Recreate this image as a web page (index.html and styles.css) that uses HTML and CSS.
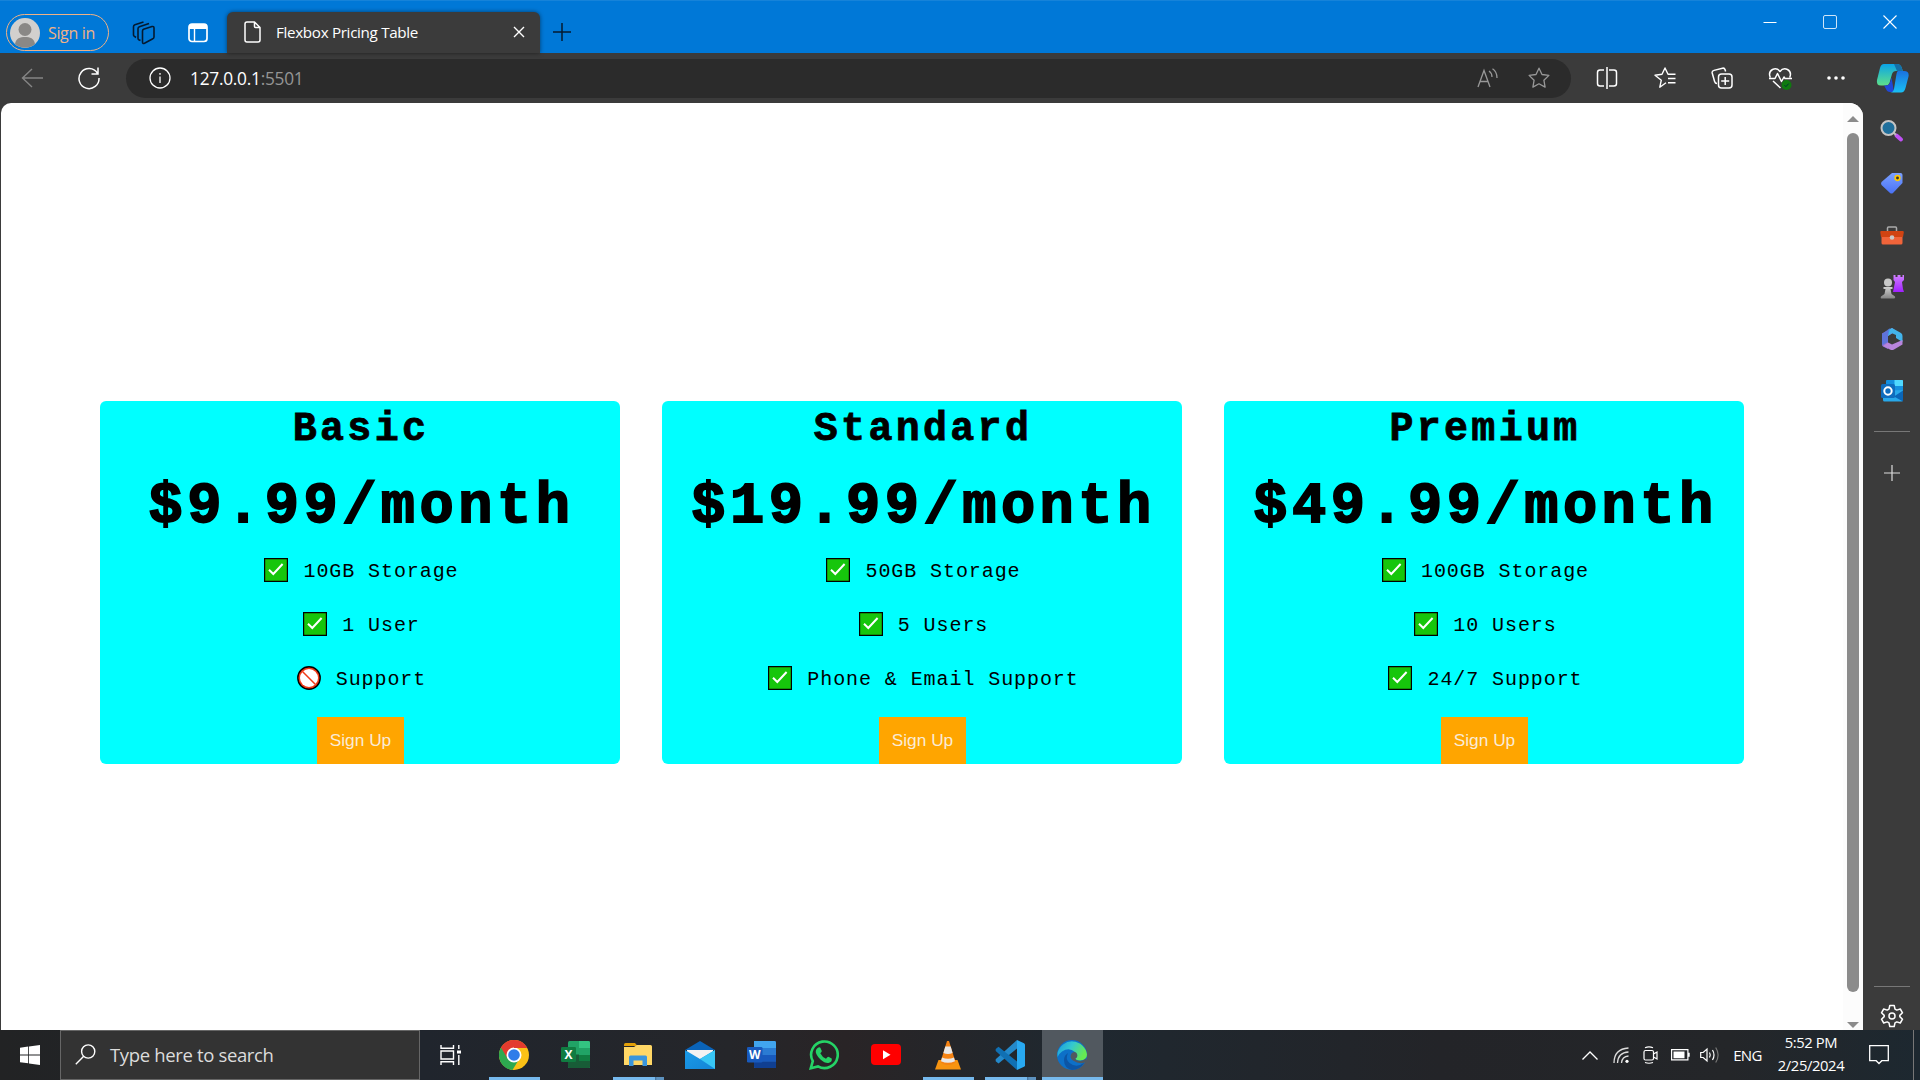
FILE: index.html
```html
<!DOCTYPE html>
<html lang="en">
<head>
<meta charset="utf-8">
<title>Flexbox Pricing Table</title>
<link rel="stylesheet" href="styles.css">
</head>
<body>
<svg class="defs" aria-hidden="true">
  <defs>
    <linearGradient id="gTeal" x1="0" y1="0" x2="0" y2="1"><stop offset="0" stop-color="#0aa4e8"/><stop offset="1" stop-color="#5ee08a"/></linearGradient>
    <linearGradient id="gBlue" x1="0" y1="0" x2="0" y2="1"><stop offset="0" stop-color="#1a72e0"/><stop offset="1" stop-color="#19c0f5"/></linearGradient>
    <linearGradient id="gTag" x1="0" y1="0" x2="0" y2="1"><stop offset="0" stop-color="#7aa0ff"/><stop offset="1" stop-color="#4a72f5"/></linearGradient>
    <linearGradient id="gGrey" x1="0" y1="0" x2="0" y2="1"><stop offset="0" stop-color="#d0d0d0"/><stop offset="1" stop-color="#858585"/></linearGradient>
    <linearGradient id="gPurple" x1="0" y1="0" x2="0" y2="1"><stop offset="0" stop-color="#d080ff"/><stop offset="1" stop-color="#a020ff"/></linearGradient>
    <linearGradient id="gEdge" x1="0" y1="0" x2="1" y2=".4"><stop offset="0" stop-color="#1a98e0"/><stop offset=".5" stop-color="#34c8cf"/><stop offset="1" stop-color="#66ea52"/></linearGradient>
    <linearGradient id="gMail" x1="0" y1="0" x2="1" y2="1"><stop offset="0" stop-color="#1a9be8"/><stop offset="1" stop-color="#1484d6"/></linearGradient>
    <symbol id="check" viewBox="0 0 24 24"><path d="M.6.6h22.8v22.8H.6z" fill="#16c60c" stroke="#000" stroke-width="1.2"/><path d="M5 11.700l4.300 4.300 9.300-10" fill="none" stroke="#fff" stroke-width="2"/></symbol>
    <symbol id="ban" viewBox="0 0 24 24"><circle cx="12" cy="12" r="11.2" fill="#f03a17" stroke="#000" stroke-width="1.4"/><circle cx="12" cy="12" r="9" fill="#fff"/><path d="M5.500 5.500l13 13" stroke="#f03a17" stroke-width="1.500"/></symbol>
  </defs>
</svg>

<header class="titlebar">
  <div class="signin">
    <svg width="30" height="30" viewBox="0 0 30 30"><circle cx="15" cy="15" r="15" fill="#d2d0ce"/><circle cx="15" cy="11.500" r="6.500" fill="#8a8886"/><path d="M5 26c1-6 5-7 10-7s9 1 10 7a15 15 0 0 1-20 0z" fill="#8a8886"/></svg>
    <span>Sign in</span>
  </div>
  <div class="tabtools">
    <svg width="23" height="24" viewBox="0 0 23 24" fill="none" stroke="#041a30" stroke-width="1.600" stroke-linejoin="round"><path d="M11.500 8.200l8.500-2.700q2-.4 2 1.500V16q0 1.300-1.200 1.800l-8.300 4.500q-2 .7-2-1.300V10q0-1.300 1-1.800zM8.500 19.500l-1.700-.8q-.8-.5-.8-1.500V7.700q0-1.500 1.400-2L17 2.500M4 16.500l-1.800-1.300q-.7-.6-.7-1.500V5.800q0-1.500 1.400-2L11.500 1"/></svg>
    <svg width="20" height="20" viewBox="0 0 20 20"><rect x="1" y="1" width="18" height="17.500" rx="3" fill="none" stroke="#fff" stroke-width="1.700"/><path d="M1 6V4q0-3 3-3h12q3 0 3 3v2z" fill="#fff"/><path d="M6.500 6v12" stroke="#fff" stroke-width="1.400"/></svg>
  </div>
  <div class="tab">
    <svg width="17" height="22" viewBox="0 0 17 22" fill="none" stroke="#fff" stroke-width="1.500" stroke-linejoin="round"><path d="M3 1h7.500L16 6.500V19q0 2-2 2H3q-2 0-2-2V3q0-2 2-2zM10.500 1v4.500q0 1 1 1H16"/></svg>
    <span class="tabtitle">Flexbox Pricing Table</span>
    <svg width="12" height="12" viewBox="0 0 12 12" stroke="#fff" stroke-width="1.400"><path d="M1 1l10 10M11 1L1 11"/></svg>
  </div>
  <svg class="newtab" width="18" height="18" viewBox="0 0 18 18" stroke="#041a30" stroke-width="1.500"><path d="M9 0v18M0 9h18"/></svg>
  <div class="winctl">
    <svg width="14" height="14" viewBox="0 0 14 14" stroke="#fff"><path d="M.5 7.500h13"/></svg>
    <svg width="14" height="14" viewBox="0 0 14 14" fill="none" stroke="#cfe5f8"><rect x=".5" y=".5" width="13" height="13" rx="1.500"/></svg>
    <svg width="14" height="14" viewBox="0 0 14 14" stroke="#fff" stroke-width="1.100"><path d="M.5.5l13 13M13.500.5l-13 13"/></svg>
  </div>
</header>

<nav class="toolbar">
  <svg class="back" width="22" height="20" viewBox="0 0 22 20" fill="none" stroke="#858585" stroke-width="1.400"><path d="M22 10H1.500M11 1L1.500 10l9.500 9"/></svg>
  <svg class="reload" width="24" height="24" viewBox="0 0 24 24" fill="none" stroke="#fff" stroke-width="1.500"><path d="M20.500 7.300A10 10 0 1 0 22 12M21 1.500v6.500h-6.500"/></svg>
  <div class="address">
    <svg width="22" height="22" viewBox="0 0 22 22" fill="none" stroke="#fff" stroke-width="1.300"><circle cx="11" cy="11" r="10"/><path d="M11 9.500v6.500M11 6v1.700"/></svg>
    <span class="url">127.0.0.1<span class="port">:5501</span></span>
    <svg width="22" height="20" viewBox="0 0 22 20" fill="none" stroke="#989898" stroke-width="1.300"><path d="M1 19L7 2.500 13 19M3 13.500h8M12 3q3 2 3 6M15.500.8q4.500 3 4.500 9.200"/></svg>
    <svg width="22" height="22" viewBox="0 0 22 22" fill="none" stroke="#989898" stroke-width="1.300" stroke-linejoin="round"><path d="M11 1.200l3 6.300 6.900.9-5 4.800 1.200 6.900-6.100-3.300-6.100 3.300 1.200-6.900-5-4.800 6.900-.9z"/></svg>
  </div>
  <div class="actions">
    <svg width="22" height="22" viewBox="0 0 22 22" fill="none" stroke="#fff" stroke-width="1.500"><path d="M8 3H4Q1.500 3 1.500 5.500v11Q1.500 19 4 19h4M13 3h5q2.500 0 2.500 2.500v11Q20.500 19 18 19h-5M11 0v22"/></svg>
    <svg width="22" height="22" viewBox="0 0 22 22" fill="none" stroke="#fff" stroke-width="1.400" stroke-linejoin="round"><path d="M12 15.800l-6.200 4.400 1.500-7L1 8.300l7-1L11 1l3 6.300h7.500M14 11.500h7.500M14 15.700h7.500"/></svg>
    <svg width="22" height="22" viewBox="0 0 22 22" fill="none" stroke="#fff" stroke-width="1.500"><rect x="7.500" y="7" width="13.500" height="14" rx="3"/><path d="M14.200 10v8M10.200 14h8M6 16.500q-1.800 0-2.400-2L1.200 6Q.8 4 3 3.400l8.500-2.200q2-.4 2.600 1.500l.5 1.800"/></svg>
    <svg width="24" height="24" viewBox="0 0 24 24" fill="none" stroke="#fff" stroke-width="1.500" stroke-linejoin="round"><path d="M2.300 11.500Q0 6 4.500 3.500 9 1.500 12 5.500q3-4 7.500-2 4.500 2.500 2.200 8M1 12.500h6l2.500-5 4 8 2.500-4.500 1 1.500h7M5 15l7.500 7"/><circle cx="18.500" cy="19" r="5" fill="#0f7a0f" stroke="none"/><path d="M16.500 19.200l1.400 1.400 2.800-3" stroke="#033" stroke-width="1"/></svg>
    <svg width="20" height="6" viewBox="0 0 20 6" fill="#fff"><circle cx="3" cy="3" r="1.800"/><circle cx="10" cy="3" r="1.800"/><circle cx="17" cy="3" r="1.800"/></svg>
    <svg width="33" height="29" viewBox="0 0 33 29"><path d="M8 0h13q3 0 4.500 3l1.300 4H20q-3 0-4 3l-2.500 9q-1 2.500-4 2.500H5Q0 21.500 1 16L4 4q1-4 4-4z" fill="url(#gTeal)"/><path d="M18 0h3q3 0 4.500 3l1.300 4H21z" fill="#1470a8"/><path d="M8 21.500h2q3 0 4-3l1.500-5L18 28h-4q-3 0-4-3z" fill="#2048d8"/><path d="M22 7h6q5.500 0 4.500 5.500L29.500 24q-1.200 4.500-4.500 4.500H14q3 0 4-3.500l2.500-15Q21 7 22 7z" fill="url(#gBlue)"/></svg>
  </div>
</nav>

<div class="middle">
  <main class="page">
    <section class="plans">
      <article class="plan">
        <h2>Basic</h2>
        <p class="price">$9.99/month</p>
        <ul>
          <li><svg class="mark"><use href="#check"/></svg>10GB Storage</li>
          <li><svg class="mark"><use href="#check"/></svg>1 User</li>
          <li><svg class="mark"><use href="#ban"/></svg>Support</li>
        </ul>
        <button>Sign Up</button>
      </article>
      <article class="plan">
        <h2>Standard</h2>
        <p class="price">$19.99/month</p>
        <ul>
          <li><svg class="mark"><use href="#check"/></svg>50GB Storage</li>
          <li><svg class="mark"><use href="#check"/></svg>5 Users</li>
          <li><svg class="mark"><use href="#check"/></svg>Phone &amp; Email Support</li>
        </ul>
        <button>Sign Up</button>
      </article>
      <article class="plan">
        <h2>Premium</h2>
        <p class="price">$49.99/month</p>
        <ul>
          <li><svg class="mark"><use href="#check"/></svg>100GB Storage</li>
          <li><svg class="mark"><use href="#check"/></svg>10 Users</li>
          <li><svg class="mark"><use href="#check"/></svg>24/7 Support</li>
        </ul>
        <button>Sign Up</button>
      </article>
    </section>
    <div class="scrollbar"><i class="up"></i><i class="thumb"></i><i class="down"></i></div>
  </main>
  <aside class="sidebar">
    <svg width="24" height="24" viewBox="0 0 24 24"><path d="M16.500 16.500l4.500 4" stroke="#c050f5" stroke-width="4" stroke-linecap="round"/><path d="M13 13l3 3" stroke="#bbb" stroke-width="2"/><circle cx="8.500" cy="9" r="7" fill="#1f6f9c" stroke="#c4c4c4" stroke-width="2"/></svg>
    <svg width="24" height="24" viewBox="0 0 24 24"><path d="M12 2h8.500Q22.500 2 22.500 4v8l-9.500 10q-1.500 1-3 0L1.500 14q-1-1.500 0-3z" fill="url(#gTag)"/><circle cx="17.500" cy="7" r="2.300" fill="#333" stroke="#ffc800" stroke-width="1.700"/></svg>
    <svg width="24" height="24" viewBox="0 0 24 24"><path d="M7.500 8V5q0-1 1-1h7q1 0 1 1v3" fill="none" stroke="#aaa" stroke-width="1.500"/><path d="M1.500 12h21v8q0 1.500-1.500 1.500H3q-1.500 0-1.500-1.500z" fill="#f0643a"/><path d="M1 8h22q1 0 .8 1.500L23 14H1L.3 9.500Q0 8 1 8z" fill="#d04312"/><circle cx="12" cy="14.500" r="2.300" fill="#c8c8c8"/></svg>
    <svg width="24" height="24" viewBox="0 0 24 24"><path d="M13.500 0h2v2h2V0h3v2h2V0H24v5l-2 2 1 7 1 3H13l2-10-1.500-2z" fill="url(#gPurple)"/><circle cx="8" cy="7.500" r="4" fill="#c8c8c8"/><path d="M3.500 12h9v2h-2l1 5 3.500 2.500q.8 2-1 2H2q-2 0-1-2L4.500 19l1-5h-2z" fill="url(#gGrey)"/></svg>
    <svg width="24" height="24" viewBox="0 0 24 24"><path d="M12 1L2 6.500v11q0 1.500 1 2L8 22V9l8-5z" fill="#8e70d8"/><path d="M12 1l9 5q1.500 1 1.500 3v6L16 11V8l-4-1.800L8 9V3z" fill="#42b4ec"/><path d="M22.500 13v4.500L14 22.500q-2 1-4 0L3 19l5-3.500 4 2z" fill="#b884dc"/><path d="M2 7v11l6-3V9l2-8z" fill="#5374dc" opacity=".8"/></svg>
    <svg width="24" height="24" viewBox="0 0 24 24"><path d="M6 2q0-1 1-1h15q1 0 1 1v10H6z" fill="#1490df"/><path d="M14.500 1H22q1 0 1 1v5h-8.500z" fill="#50d9ff"/><path d="M3 12l20-1v10q0 1.500-1.500 1.500h-17Q3 22.500 3 21z" fill="#28a8ea"/><path d="M23 11.500v11l-9-5z" fill="#0a66b8"/><rect x="1" y="5" width="14" height="14" rx="1.500" fill="#0f6cbd"/><circle cx="8" cy="12" r="3.700" fill="none" stroke="#fff" stroke-width="2"/></svg>
    <i class="rule"></i>
    <svg class="plus" width="16" height="16" viewBox="0 0 16 16" stroke="#ddd" stroke-width="1.200"><path d="M8 0v16M0 8h16"/></svg>
    <i class="rule low"></i>
    <svg class="gear" width="24" height="24" viewBox="0 0 24 24" fill="none" stroke="#fff" stroke-width="1.500" stroke-linejoin="round"><path d="M9.800 1.500h4.400l.8 3.600 1.800 1 3.500-1.100 2.200 3.800-2.700 2.600v1.200l2.700 2.600-2.200 3.800-3.500-1.100-1.800 1-.8 3.600H9.800L9 18.900l-1.800-1-3.500 1.100-2.200-3.800 2.700-2.600v-1.200L1.500 8.800 3.700 5l3.500 1.100 1.800-1z"/><circle cx="12" cy="12" r="3"/></svg>
  </aside>
</div>

<footer class="taskbar">
  <div class="start"><svg width="20" height="20" viewBox="0 0 20 20" fill="#fff"><path d="M0 2.800l8.200-1.200v7.900H0zM9 1.500L20 0v9.500H9zM0 10.400h8.200v7.900L0 17.200zM9 10.400h11V20L9 18.500z"/></svg></div>
  <div class="search"><svg width="21" height="21" viewBox="0 0 21 21" fill="none" stroke="#fff" stroke-width="1.400"><circle cx="13.200" cy="7.500" r="6.600"/><path d="M8.700 12.300L.8 20.300"/></svg><span>Type here to search</span></div>
  <div class="apps">
    <div class="app"><svg width="21" height="20" viewBox="0 0 21 20" fill="none" stroke="#fff" stroke-width="1.400"><path d="M1 0v3.300h12.500V0M1 20v-3.300h12.500V20M1 6h12.500v8H1zM18.800 0v4M18.800 10v10"/><path d="M17 5.500h4v3h-4z" fill="#fff" stroke="none"/></svg></div>
    <div class="app run"><svg width="30" height="30" viewBox="0 0 30 30"><circle cx="15" cy="15" r="15" fill="#fbc116"/><path d="M15 15L2 7.500A15 15 0 0 0 13.500 30l7-11.500z" fill="#2da94f"/><path d="M2 7.500A15 15 0 0 1 28 7.500H15l-6.500 11z" fill="#e33b2e"/><circle cx="15" cy="15" r="7.500" fill="#fff"/><circle cx="15" cy="15" r="5.800" fill="#2f7de9"/><path d="M15 7.500h13" stroke="#e33b2e"/></svg></div>
    <div class="app"><svg width="30" height="28" viewBox="0 0 30 28"><rect x="7" width="22" height="27" rx="1.500" fill="#21a366"/><path d="M18 0h9.500Q29 0 29 1.500V7H18z" fill="#33c481"/><path d="M7 13.500h11V27H8.500Q7 27 7 25.500z" fill="#185c37"/><path d="M18 14h11v6H18z" fill="#107c41"/><path d="M18 20h11v5.500q0 1.500-1.500 1.500H18z" fill="#185c37"/><rect y="6" width="15" height="15" rx="1.300" fill="#107c41"/><text x="7.500" y="18" class="badge">X</text></svg></div>
    <div class="app run multi"><svg width="28" height="24" viewBox="0 0 28 24"><path d="M0 1.500Q0 0 1.500 0H11l2.500 3H0z" fill="#e3a008"/><path d="M0 4h10l3-2h13.500Q28 2 28 3.500V22H0z" fill="#ffd766"/><path d="M5 23v-9q0-1.500 1.500-1.500h15Q23 12.500 23 14v9h-4.500v-5.500h-9V23z" fill="#3a96dd"/></svg></div>
    <div class="app"><svg width="30" height="28" viewBox="0 0 30 28"><path d="M0 9L15 0l15 9z" fill="#0a63b8"/><path d="M2 9h26v10H2z" fill="#f2f2f2"/><path d="M0 9l15 9 15-9v19H0z" fill="url(#gMail)"/><path d="M30 9v19L15 18z" fill="#38c6f4"/></svg></div>
    <div class="app"><svg width="30" height="28" viewBox="0 0 30 28"><rect x="7" width="22" height="27" rx="1.500" fill="#2b7cd3"/><path d="M7 0h20.500Q29 0 29 1.500V7H7z" fill="#41a5ee"/><path d="M7 14h22v6.500H7z" fill="#185abd"/><path d="M7 20.500h22V27H8.500Q7 27 7 25.500z" fill="#103f91"/><rect y="6" width="15.500" height="15.500" rx="1.300" fill="#185abd"/><text x="7.700" y="18" class="badge">W</text></svg></div>
    <div class="app"><svg width="30" height="30" viewBox="0 0 30 30"><path d="M1.800 28.200l2-7A13.300 13.300 0 1 1 9 26.400z" fill="none" stroke="#25d366" stroke-width="2.600"/><path d="M9.500 7.500q1.500-.7 2 .5l1.300 3q0 1-1.500 2.300 2 4 5.700 5.500 1.400-2 2.500-2l3.200 1.700q.8 3.500-3.200 4.500-3.500.5-8-3.500-6-6-4.500-9.500.8-2 2.500-2.500z" fill="#25d366"/></svg></div>
    <div class="app"><svg width="30" height="22" viewBox="0 0 30 22"><rect width="30" height="21" rx="4" fill="red"/><path d="M12 6.300v9l7.500-4.500z" fill="#fff"/></svg></div>
    <div class="app run"><svg width="26" height="29" viewBox="0 0 26 29"><path d="M3.500 19h19L26 28.500H0z" fill="#f79410"/><path d="M12 0h2l6.500 21q-3 3-7.500 3t-7.500-3z" fill="#f58313"/><path d="M10.300 5.500h5.400L17.600 12q-4.600 2-9.200 0zM7 16.500q6 2.500 12 0l1 3.700q-7 3.300-14 0z" fill="#e8e8e8"/></svg></div>
    <div class="app run multi"><svg width="30" height="30" viewBox="0 0 30 30"><path d="M22 0v8.500L3.500 23.500.7 21.300v-2L22 0z" fill="#2489ca"/><path d="M22 30v-8.500L3.500 6.700.7 8.900v2L22 30z" fill="#1070b3"/><path d="M22 0l7 3.200q1 .5 1 1.600v20.400q0 1.100-1 1.600L22 30z" fill="#28a9f1"/></svg></div>
    <div class="app run active"><svg width="30" height="30" viewBox="0 0 30 30"><circle cx="15" cy="15" r="15" fill="#0d70c8"/><path d="M.5 13A15 15 0 0 1 30 14.500Q30 20 23 20.500q-5-.3-4.500-2.500 2.500-3-.5-6-6-5-13-.5Q1.500 14 .5 17z" fill="url(#gEdge)"/><path d="M11 13q-3 6 1.500 10 7 5.500 15-.5Q23 30 15 30 7 28 7 20q0-4.500 4-7z" fill="#0c55a5"/><path d="M18.500 18q-.6 3 5 3 3-.3 5.500-2.500v4l-1 0q-6 2-12-2-4-3-1.500-7 2-2.500 4.500-1 2.500 2.500.5 5.500z" fill="#51585f"/></svg></div>
  </div>
  <div class="tray">
    <svg width="16" height="9" viewBox="0 0 16 9" fill="none" stroke="#fff" stroke-width="1.300"><path d="M.5 8.500L8 1l7.500 7.500"/></svg>
    <svg width="16" height="16" viewBox="0 0 16 16" fill="none" stroke="#ddd" stroke-width="1.300"><path d="M1 16Q1 2 15.500 1M4.500 16Q5 5.500 15.500 5M8.500 16q.5-6.500 7-7" /><circle cx="14" cy="14.300" r="1.600" fill="#fff" stroke="none"/></svg>
    <svg width="16" height="18" viewBox="0 0 16 18" fill="none" stroke="#fff" stroke-width="1.200"><rect x="1" y="4.500" width="9.500" height="9.500" rx="1.500"/><path d="M10.500 8l3.500-2v7l-3.500-2M2 1.800Q6 0 10 1.800M2 16.500q4 1.500 8 0"/></svg>
    <svg width="19" height="12" viewBox="0 0 19 12"><path d="M.6.600h16.300v10.300H.6z" fill="none" stroke="#fff" stroke-width="1.200"/><path d="M2.500 2.500h11v6.700h-11zM17 3.700h1.700v4H17z" fill="#fff"/></svg>
    <svg width="20" height="18" viewBox="0 0 20 18" fill="none" stroke="#fff" stroke-width="1.200"><path d="M.7 6.500h2.500L7 3v12l-3.800-3.500H.7zM9.500 6.500q1.500 2.500 0 5M12.500 4q3 5 0 10"/><path d="M15.700 1.500q4.800 7.500 0 15" stroke="#777"/></svg>
    <span class="lang">ENG</span>
    <div class="clock"><span>5:52 PM</span><span>2/25/2024</span></div>
    <svg width="20" height="20" viewBox="0 0 20 20" fill="none" stroke="#fff" stroke-width="1.300"><path d="M.7.700h18.600v15h-6.500L10 18.500l-2.800-2.800H.7z"/></svg>
    <i class="peek"></i>
  </div>
</footer>
</body>
</html>
```
FILE: styles.css
```css
* { box-sizing: border-box; }
body {
  margin: 0;
  width: 1920px;
  height: 1080px;
  overflow: hidden;
  display: flex;
  flex-direction: column;
  background: #3b3b3b;
  color: #fff;
  font-family: "Open Sans", "Noto Sans", sans-serif;
}
svg { display: block; flex: none; }
.defs { position: absolute; width: 0; height: 0; }

/* window title bar */
.titlebar {
  flex: none;
  height: 53px;
  display: flex;
  background: #0078d7;
  border-top: 1px solid #1683d9;
  padding-left: 6px;
}
.signin {
  width: 103px;
  height: 37px;
  margin-top: 13px;
  padding-left: 3px;
  display: flex;
  align-items: center;
  gap: 8px;
  border: 1.5px solid #f0b285;
  border-radius: 19px;
  color: #f0b285;
  font-size: 16px;
  letter-spacing: -.35px;
  white-space: nowrap;
}
.tabtools {
  width: 118px;
  padding: 13px 19px 0 23px;
  display: flex;
  justify-content: space-between;
  align-items: center;
  height: 50px;
}
.tab {
  width: 313px;
  margin-top: 11px;
  padding: 0 15px 2px 17px;
  display: flex;
  align-items: center;
  background: #3b3b3b;
  border-radius: 6px 6px 0 0;
  box-shadow: 0 0 4px rgba(0, 0, 0, .5);
}
.tabtitle { margin-left: 15px; flex: 1; font-size: 15.2px; letter-spacing: -.32px; white-space: nowrap; }
.newtab { margin: 22px 0 0 13px; }
.winctl { margin: 14px 23px 0 auto; display: flex; gap: 46px; }

/* navigation toolbar */
.toolbar { flex: none; height: 50px; display: flex; align-items: center; padding-left: 21px; }
.reload { margin-left: 34px; }
.address {
  width: 1445px;
  height: 39px;
  margin-left: 25px;
  padding: 0 21px 0 23px;
  display: flex;
  align-items: center;
  gap: 19px;
  background: #2b2b2b;
  border-radius: 20px;
}
.address svg:last-child { margin-left: 10px; }
.url { flex: 1; font-size: 17.3px; letter-spacing: -.25px; }
.port { color: #959595; }
.actions { flex: 1; display: grid; grid-template-columns: 72px 44px 70px 45px 68px 44px; justify-items: center; align-items: center; }

/* viewport */
.middle { flex: none; height: 927px; display: flex; padding-left: 1px; }
.page {
  width: 1862px;
  display: flex;
  align-items: flex-start;
  background: #fff;
  border-radius: 10px 14px 0 0;
  overflow: hidden;
  color: #000;
}
.plans { width: 1842px; padding: 298px 99px 0; display: flex; gap: 42px; }
.plan {
  flex: 1;
  height: 363px;
  display: flex;
  flex-direction: column;
  align-items: center;
  background: aqua;
  border-radius: 6px;
  font-family: "Liberation Mono", monospace;
}
.plan h2 {
  margin: 2px 0 -2px 2px;
  font-size: 40px;
  line-height: 54px;
  letter-spacing: 3.3px;
  -webkit-text-stroke: .8px #000;
}
.price {
  margin: 3px 0 -3px 3px;
  font-size: 57px;
  font-weight: bold;
  line-height: 98px;
  letter-spacing: 4.500px;
  -webkit-text-stroke: 1.8px #000;
  white-space: nowrap;
}
.plan ul { margin: 0; padding: 0; list-style: none; font-size: 20px; letter-spacing: .92px; }
.plan li { height: 54px; display: flex; align-items: flex-start; justify-content: center; line-height: 37px; }
.mark { width: 24px; height: 24px; margin: 5px 15px 0 3px; }
.plan button {
  width: 87px;
  height: 47px;
  margin-top: auto;
  padding: 0 0 0 1px;
  border: 0;
  background: orange;
  color: antiquewhite;
  font: 17.3px "Liberation Sans", Arial, sans-serif;
}
.scrollbar {
  width: 20px;
  height: 100%;
  padding-top: 13px;
  display: flex;
  flex-direction: column;
  align-items: center;
  background: #fcfcfc;
}
.up, .down { border: 6px solid transparent; border-top-width: 0; border-bottom: 6px solid #8b8b8b; }
.down { border-top: 6px solid #8b8b8b; border-bottom-width: 0; }
.thumb { width: 12px; height: 859px; margin: 11px 0 30px; border-radius: 6px; background: #8b8b8b; }

/* side panel */
.sidebar { width: 57px; display: flex; flex-direction: column; align-items: center; padding-top: 16px; gap: 28px; }
.rule { width: 36px; height: 1px; background: #777; flex: none; }
.plus { margin-top: 5px; }
.low { margin-top: auto; }
.gear { margin: -11px 0 2px; }

/* taskbar */
.taskbar { flex: none; height: 50px; display: flex; background: linear-gradient(90deg, #222324, #20252d 22%, #25262a 38%, #292426 44%, #24262a 50%, #1f2830 56%, #232428 75%, #242629 90%, #1d2830); }
.start { width: 60px; padding: 15px 20px; }
.search {
  width: 360px;
  padding: 0 0 2px 14px;
  display: flex;
  align-items: center;
  gap: 14px;
  background: #333;
  border: 1px solid #666;
  color: #dcdcdc;
  font-size: 18.5px;
  letter-spacing: -.35px;
}
.apps { display: grid; grid-template-columns: 60px 68px 55px 70px 54px 69px 56px 68px 56px 68px 56px; justify-items: center; }
.app { width: 51px; display: flex; align-items: center; justify-content: center; }
.run { border-bottom: 3px solid #76b9ed; padding-top: 3px; }
.multi { border-image: linear-gradient(90deg, #76b9ed 79%, #467299 79%, #5d92bf 82%) 3; }
.active { width: 61px; background: #51585f; }
.badge { font: bold 12px "Open Sans", sans-serif; fill: #fff; text-anchor: middle; }
.tray { margin-left: auto; width: 345px; display: grid; grid-template-columns: 30px 32px 28px 30px 30px 45px 82px 54px 14px; justify-items: center; align-items: center; }
.lang { font-size: 15px; letter-spacing: -.6px; }
.clock { display: flex; flex-direction: column; align-items: center; margin-top: -2px; font-size: 14.8px; line-height: 23px; letter-spacing: -.4px; white-space: nowrap; }
.peek { width: 1px; height: 50px; background: #777; }
```
